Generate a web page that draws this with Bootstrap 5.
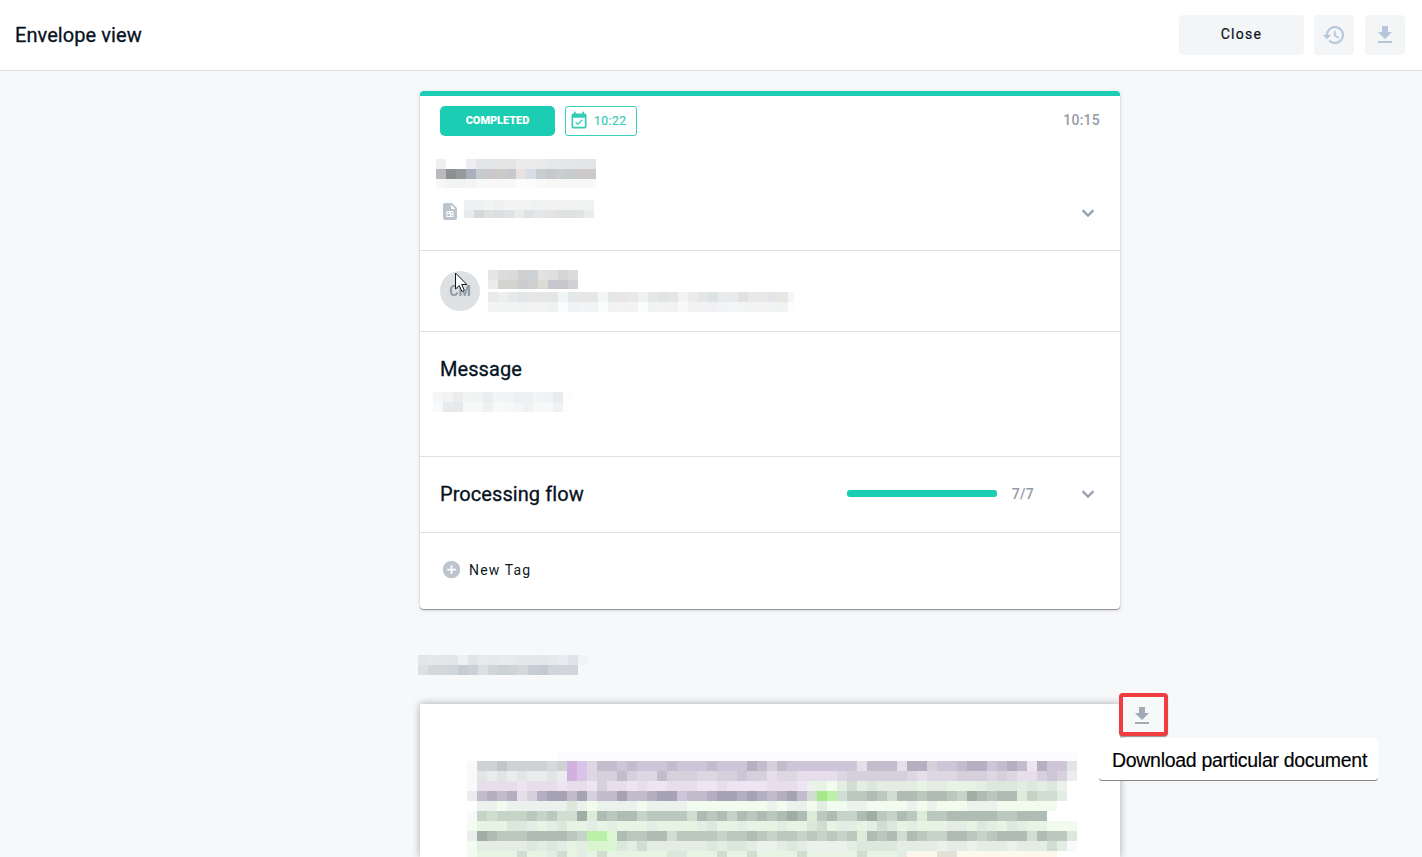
<!DOCTYPE html>
<html lang="en">
<head>
<meta charset="utf-8">
<meta name="viewport" content="width=device-width, initial-scale=1">
<title>Envelope view</title>
<link href="https://cdn.jsdelivr.net/npm/bootstrap@5.3.0/dist/css/bootstrap.min.css" rel="stylesheet">
<style>
  body { background: #f7f8fa; font-family: Roboto, "Liberation Sans", sans-serif; color: #0d1a26; height: 857px; overflow: hidden; }
  svg { display: block; flex: none; fill: currentColor; }
  .topbar { height: 71px; border-bottom: 1px solid #dddfe2; padding: 0 17px 1px 15px; }
  .heading { font-size: 20px; font-weight: 400; letter-spacing: .07px; -webkit-text-stroke: .3px currentColor; line-height: 24px; margin: 0; color: #06121e; }
  .tool { height: 40px; border: 0; border-radius: 4px; background: #f3f5f7; color: #b4c7dc; padding: 0; }
  .tool-close { width: 125px; color: #06121e; font-size: 14px; font-weight: 400; letter-spacing: 1.3px; -webkit-text-stroke: .2px currentColor; padding-bottom: 1px; }
  .tool-icon { width: 40px; }
  .column { width: 700px; margin-left: 420px; padding-top: 20px; }
  .envelope { border: 0; border-top: 5px solid #1bcdb2; border-radius: 4px; box-shadow: 0 1px 1px rgba(0,0,0,.36), 0 1px 4px rgba(0,0,0,.14); height: 518px; }
  .part { border-bottom: 1px solid #dddfe1; padding-left: 20px; padding-right: 20px; }
  .part:last-child { border-bottom: 0; }
  .status { width: 115px; height: 30px; border-radius: 5px; background: #1bcdb2; color: #fff; font-size: 11px; font-weight: 900; letter-spacing: -.05px; padding: 0; line-height: 30px; }
  .due { width: 72px; height: 30px; margin-left: 10px; border: 1px solid #3acfb8; border-radius: 3px; color: #35cbb5; font-size: 12px; font-weight: 400; letter-spacing: .55px; -webkit-text-stroke: .2px currentColor; padding-left: 3px; gap: 5px; }
  .due svg { stroke: none; }
  .muted { color: #939da6; font-size: 14px; font-weight: 500; letter-spacing: .25px; line-height: 20px; }
  .avatar { width: 40px; height: 40px; margin-top: 1px; background: #dde1e4; color: #929ca3; font-size: 14px; font-weight: 700; }
  .pointer { position: absolute; left: 15px; top: 1px; }
  .meter { width: 150px; height: 7px; border-radius: 3px; --bs-progress-bar-bg: #1bcdb2; }
  .new-tag { font-size: 14px; letter-spacing: 1.150px; gap: 7px; line-height: 20px; }
  .mosaic { display: grid; justify-content: start; }
  .sheet { background: #fff; height: 153px; box-shadow: 0 0 8px rgba(0,0,0,.32); padding: 47px 0 0 47px; position: relative; }
  .doc-download { position: absolute; left: 699px; top: -11px; width: 49px; height: 43px; border: 4px solid #f23d40; border-radius: 4px; background: #f7f8fa; color: #a1abb5; box-shadow: 0 1px 1px rgba(0,0,0,.4); padding: 2px 3px 0 0; }
  .hint { position: absolute; left: 679px; top: 34px; width: 279px; height: 42px; background: #fff; color: #000; border-radius: 3px; box-shadow: 0 1px 0 #858789; font: 19.500px/44px "Liberation Sans", sans-serif; white-space: nowrap; padding-left: 13px; letter-spacing: -.3px; -webkit-text-stroke: .15px currentColor; }
</style>
<script src="https://cdn.jsdelivr.net/npm/bootstrap@5.3.0/dist/js/bootstrap.bundle.min.js"></script>
</head>
<body>
<header class="topbar bg-white d-flex align-items-center">
  <h1 class="heading me-auto">Envelope view</h1>
  <button class="tool tool-close">Close</button>
  <button class="tool tool-icon d-flex align-items-center justify-content-center" style="margin-left:10px" aria-label="History">
    <svg width="24" height="24" viewBox="0 0 24 24"><path stroke="currentColor" stroke-width=".3" d="M13 3a9 9 0 0 0-9 9H1l3.890 3.890.07.14L9 12H6c0-3.870 3.130-7 7-7s7 3.130 7 7-3.130 7-7 7c-1.930 0-3.680-.79-4.940-2.060l-1.420 1.420A8.954 8.954 0 0 0 13 21a9 9 0 0 0 0-18zm-1 5v5l4.280 2.540.72-1.210-3.500-2.080V8H12z"/></svg>
  </button>
  <button class="tool tool-icon d-flex align-items-center justify-content-center" style="margin-left:11px" aria-label="Download">
    <svg width="24" height="24" viewBox="0 0 24 24"><path d="M19 9h-4V3H9v6H5l7 7 7-7zM5 18v2h14v-2H5z"/></svg>
  </button>
</header>

<main class="column">
  <div class="card envelope">
    <section class="part" style="height:155px;padding-top:10px">
      <div class="d-flex align-items-center">
        <span class="badge status">COMPLETED</span>
        <span class="due d-flex align-items-center">
          <svg width="20" height="20" viewBox="0 0 24 24"><path d="M16.530 11.060 15.470 10l-4.880 4.880-2.120-2.120-1.060 1.060L10.590 17l5.940-5.940zM19 3h-1V1h-2v2H8V1H6v2H5c-1.110 0-2 .9-2 2v14c0 1.100.89 2 2 2h14c1.100 0 2-.9 2-2V5c0-1.100-.9-2-2-2zm0 16H5V8h14v11z"/></svg>10:22</span>
        <span class="muted ms-auto" style="padding-bottom:2px">10:15</span>
      </div>
      <div class="mosaic" data-mosaic="subject" style="margin:23px 0 0 -4px"></div>
      <div class="d-flex align-items-start" style="margin-top:12px">
        <svg width="14" height="17" viewBox="0 0 14 17" style="margin:2.500px 0 0 3px;color:#bcc4cd"><path fill-rule="evenodd" d="M2 0h7l5 5v10a2 2 0 0 1-2 2H2a2 2 0 0 1-2-2V2a2 2 0 0 1 2-2zm6 1.500V6h4.500zM3.500 8v6h7V8z"/><path d="M4.500 9h1.500v1H4.500zM4.500 11h2.500v2H4.500zM8 9h1.500v1.500H8zM8 12h1.500v1H8z"/></svg>
        <div class="mosaic" data-mosaic="file" style="margin-left:7px"></div>
        <svg class="ms-auto" width="24" height="24" viewBox="0 0 24 24" style="color:#94a0ab;margin-top:1px"><path stroke="currentColor" stroke-width=".4" d="M16.590 8.590 12 13.170 7.410 8.590 6 10l6 6 6-6z"/></svg>
      </div>
    </section>
    <section class="part d-flex" style="height:81px;padding-top:19px">
      <div class="avatar rounded-circle d-flex align-items-center justify-content-center position-relative">CM
        <svg class="pointer" width="14" height="21" viewBox="0 0 14 21"><path d="M.5 1v16l3.700-3.500 2.800 6 2.400-1.100-2.700-5.900h5.100z" fill="#fff" stroke="#111827" stroke-width="1"/></svg>
      </div>
      <div class="ms-2">
        <div class="mosaic" data-mosaic="sender"></div>
        <div class="mosaic" data-mosaic="address" style="margin-top:3px"></div>
      </div>
    </section>
    <section class="part" style="height:125px;padding-top:25px">
      <h2 class="heading">Message</h2>
      <div class="mosaic" data-mosaic="message" style="margin:11px 0 0 -7px"></div>
    </section>
    <section class="part d-flex align-items-center" style="height:76px;padding-bottom:2px">
      <h2 class="heading me-auto">Processing flow</h2>
      <div class="progress meter"><div class="progress-bar" style="width:100%"></div></div>
      <span class="muted" style="margin:0 42px 0 15px">7/7</span>
      <svg width="24" height="24" viewBox="0 0 24 24" style="color:#94a0ab"><path stroke="currentColor" stroke-width=".4" d="M16.590 8.590 12 13.170 7.410 8.590 6 10l6 6 6-6z"/></svg>
    </section>
    <section class="part" style="padding-top:26px">
      <div class="new-tag d-flex align-items-center">
        <svg width="21" height="21" viewBox="0 0 24 24" style="color:#bcc4cd;margin-left:1px"><path d="M12 2a10 10 0 1 0 0 20 10 10 0 0 0 0-20zm5 11h-4v4h-2v-4H7v-2h4V7h2v4h4v2z"/></svg>New Tag
      </div>
    </section>
  </div>

  <div class="mosaic" data-mosaic="document" style="margin:46px 0 0 -2px"></div>

  <div class="sheet" style="margin-top:29px">
    <div class="mosaic" data-mosaic="page"></div>
    <button class="doc-download d-flex align-items-center justify-content-center" aria-label="Download document">
      <svg width="24" height="24" viewBox="0 0 24 24"><path d="M19 9h-4V3H9v6H5l7 7 7-7zM5 18v2h14v-2H5z"/></svg>
    </button>
    <div class="hint">Download particular document</div>
  </div>
</main>

<script>
  // One letter per tile tone of the redacted page
  const tones = {
    A:'a6a4b4',B:'b4b0c1',C:'c3bccd',D:'cdc6d8',E:'d6d0dd',F:'ddd7e3',G:'e6dfeb',H:'ede5f1',
    1:'f8f9f9',2:'ebeced',3:'e2e4e6',4:'d8d9dc',5:'cfd1d3',6:'c3c5c8',
    a:'a0ada5',b:'afbcb3',c:'bac8bd',d:'c6d4c7',e:'d0ddd0',f:'dde8dd',g:'e3ede3',h:'e8f4e3',i:'ebf2ed',j:'f1fcef',k:'dcecd9',
    w:'ffffff',v:'fcfcfe',P:'d2b1e0',Q:'dac3e8',X:'a4e88b',Y:'bbf0a9',Z:'d9f6d1',y:'fdf8ec',z:'e3e0d8'
  };
  const page = [
    'wwwwwwwww' + 'v'.repeat(52),
    '1556555545PQFCCDCDDDC'+'DDDCDDDBCECDDDDDDDGCC'+'CGBBEDDCBBDCBCHBDD3',
    '1323232232PQFEECEFFCE'+'EEFFEEDEEGFFGGGGFEEEE'+'EEFGFFFEEEFEFGGEDE2',
    '1GGGGHGGGHGGHEGGHGHHG'+'GGHHGHHHHGGGHihjgegfg'+'ggghgghhhgfffgfgfiw',
    '2CBCBGEBAACAECCACCBAA'+'DCCBAABABCBACeXYeccbc'+'ebbcbbcdabcbbkdeegw',
    'wiijiiiiiifijiiiijiii'+'ijjjjjjjjijiijgjjiijj'+'jjijijjjiiijjjjjjww',
    '1dedddcdceeakbcbbdccc'+'cebcbdbcbcbabkcbddbac'+'dbckccbbbbbccbbbwww',
    'jhhhffghgfhhghghhhghh'+'hhgfhhghhhghhfehgghge'+'fhghhhgghfghfghhjjj',
    '2abcccbbbbcdYYZbccbbe'+'ccccdccbcdccdcdcdckbc'+'bebcddbbcdcbbbebccf',
    'jgggggfgfghgZZZfgeggg'+'gggfgffgiigfgiiiigfff'+'fggggiggigggigggeg1',
    'jhhhhehhgehghehhhhhhf'+'fhhhehhehhhhehhhhhehh'+'hgyyyzzyyyyyyyyyyww'
  ].map(r => [...r].map(k => tones[k]));
  const list = s => s.split(' ');
  const mosaics = {
    subject: { heights: [10,10,9], rows: [
      list('efeff1 ffffff ffffff eeeef0 e3e5e6 e3e5e6 e4e4e5 e4e4e6 ebebe9 ebebea e9eaec e6e8e9 e5e7e8 e4e6e7 e3e4e6 e3e4e5'),
      list('bbb8be 8e8f91 959b9d a9afbb c5cccd cbc7cb cacbc9 c9c7cc e8e2de d8dee7 c7cecd c7c8ce c9cdcd c6cccd ccc8cc cacbca'),
      list('f7f7f7 f2f3f3 f2f3f3 f4f4f5 f8f8f8 f8f8f8 f8f8f8 f8f8f8 fcfcfc fcfcfc f9f9f9 f7f7f7 f7f7f8 f7f7f7 f7f7f7 f8f8f8')] },
    file: { heights: [10,8], rows: [
      list('eff0f1 f0f1f2 f2f3f3 eef0f1 f4f4f4 f3f3f3 f2f3f3 f0f1f1 f0f2f1 f1f2f1 f2f2f2 f0f1f2 f1f2f2'),
      list('e8eaeb d5d9dc dfe1e0 dbdfe0 e0e1e2 e8eaeb dfe2e2 e3e8ea e4e4e3 dfe1e2 dee1e1 e0e3e4 eaedec')] },
    sender: { heights: [10,9], rows: [
      list('e5e5e6 dddcda dadada d2d0cf cdd4d6 e2e2e0 dddfe1 d6d6d6 dadbdd'),
      list('ebebec d3d4ce d3d3d0 cccdcf cfcfd0 dbdad5 c6c6cc c6c6cc d1d1d6')] },
    address: { heights: [10,10], lastWidth: 6, rows: [
      list('e9ebea edefee e7e8e8 e2e6e9 e5e6e8 e5e6e7 e5e7e6 f0f5f6 e3e8e9 e6e6e7 e6e8e7 f3f5f7 e3e7e7 e8e7e5 e8e9eb eef1f0 e5e7e8 e2e4e4 e3e7e7 f3f3f3 eaeced e7e6e7 dde2e5 e7ebed e8eaeb e1e1e2 e8e9eb e8e9eb e4e5e8 e7e7e5 f3f7f9'),
      list('f3f4f4 f3f4f4 f2f3f3 f1f2f4 f3f3f3 f2f3f3 f0f2f1 f9fcfb f0f2f5 f3f4f5 f1f3f4 fafbfb f1f3f3 f2f3f2 f1f3f2 fbfdfc f1f3f3 f3f3f3 f2f2f3 f9f9fa f1f2f4 f2f2f3 eff1f3 f2f3f6 f4f5f6 f3f4f5 f2f4f4 f3f4f3 f2f4f3 f1f3f2 fcfdff')] },
    message: { heights: [10,10], rows: [
      list('f5f6f7 f3f3f3 ebecee f3f4f4 f1f2f3 ecedef f3f4f5 f2f3f4 eeeff1 eff0f1 f3f4f5 f1f2f4 eaebee fdfdfd'),
      list('f8f9fa e9eaed e7e8ea f6f7f8 f7f8f8 eff0f2 f8f9f9 f7f8f8 f4f5f6 f0f1f3 f7f8f8 f7f8f9 eff1f2 fefefe')] },
    document: { heights: [10,10], rows: [
      list('e3e6e8 e5e8e9 e4e7e8 e2e6e8 eff0f3 e0e4e6 e7e9eb e7e8eb e9eaec e8e9ec e5e7ea e5e8ea e4e7e9 e6e8ea ebecf0 e0e3e9 f2f3f5'),
      list('dcdfe3 d2d7da d3d7da cfd5d8 c6ccd3 cbd0d6 dce0e3 cfd6d8 cbd2d4 cfd4d7 d5d9dc c7cdd4 c5cbd2 cfd5d8 d3d5da d2d5db f7f8fa')] },
    page: { heights: [10,10,10,10,10,10,10,10,10,10,6], rows: page }
  };
  document.querySelectorAll('[data-mosaic]').forEach(box => {
    const m = mosaics[box.dataset.mosaic];
    box.style.gridTemplateColumns = `repeat(${m.rows[0].length - 1}, 10px) ${m.lastWidth || 10}px`;
    box.style.gridTemplateRows = m.heights.map(h => h + 'px').join(' ');
    m.rows.flat().forEach(c => {
      const tile = document.createElement('i');
      tile.style.background = '#' + c;
      box.append(tile);
    });
  });
</script>
</body>
</html>
